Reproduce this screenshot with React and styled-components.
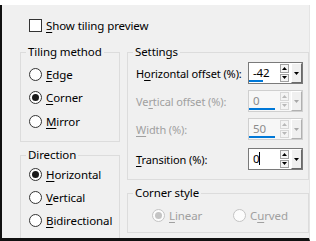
import React from 'react'
import styled, { createGlobalStyle } from 'styled-components'

const GlobalStyle = createGlobalStyle`
  html, body {
    margin: 0;
    padding: 0;
    background: #ffffff;
  }
  body {
    font-family: "Noto Sans", "Liberation Sans", sans-serif;
    font-size: 11px;
    letter-spacing: -0.1px;
    color: #000;
  }
`

const Page = styled.div`
  width: 316px;
  height: 241px;
  padding: 5px 6px 0 0;
  box-sizing: border-box;
  background: #fff;
`

const Panel = styled.div`
  height: 236px;
  box-sizing: border-box;
  background: #f0f0f0;
  border-left: 2px solid #111;
  border-bottom: 3px solid #111;
  border-right: 1px solid #e4e4e4;
  padding: 14px 0 0 18px;
  overflow: hidden;
`

const CheckRow = styled.label`
  display: flex;
  align-items: center;
  gap: 4px;
  margin-left: 9px;
  height: 13px;
  white-space: nowrap;
  font-size: 11.5px;
`

const Box = styled.span`
  width: 13px;
  height: 13px;
  box-sizing: border-box;
  border: 1px solid #333;
  background: #fff;
`

const Columns = styled.div`
  display: grid;
  grid-template-columns: 100px 182px;
  column-gap: 7px;
  margin-top: 12px;
`

const Column = styled.div`
  display: flex;
  flex-direction: column;
  gap: ${p => p.$gap}px;
`

const Group = styled.fieldset`
  margin: 0;
  padding: 0 0 0 8px;
  border: 1px solid #dcdcdc;
  min-width: 0;
  height: ${p => p.$h}px;
  box-sizing: border-box;
  display: flex;
  flex-direction: column;
`

const Legend = styled.legend`
  padding: 0 2px;
  margin-left: -3px;
  line-height: 16px;
  font-size: 11.5px;
  color: #000;
`

const RadioList = styled.div`
  display: flex;
  flex-direction: ${p => p.$row ? 'row' : 'column'};
  gap: ${p => p.$gap}px;
  margin-top: ${p => p.$top}px;
  padding-left: ${p => p.$left || 0}px;
`

const RadioItem = styled.label`
  display: flex;
  align-items: center;
  gap: 4px;
  height: 16px;
  white-space: nowrap;
  font-size: 11.5px;
  color: ${p => p.$disabled ? '#a0a0a0' : '#000'};
  width: ${p => p.$w ? p.$w + 'px' : 'auto'};
`

const Dot = styled.span`
  width: 13px;
  height: 13px;
  box-sizing: border-box;
  border-radius: 50%;
  border: 1px solid ${p => p.$disabled ? '#c4c4c4' : '#333'};
  background: ${p => p.$disabled ? '#fcfcfc' : '#fff'};
  display: flex;
  align-items: center;
  justify-content: center;
  flex-shrink: 0;

  &::after {
    content: '';
    display: ${p => p.$on ? 'block' : 'none'};
    width: 7px;
    height: 7px;
    border-radius: 50%;
    background: ${p => p.$disabled ? '#c4c4c4' : '#1a1a1a'};
  }
`

const U = styled.span`
  text-decoration: underline;
  text-underline-offset: 2px;
`

const Rows = styled.div`
  display: flex;
  flex-direction: column;
  margin-top: 1px;
`

const Row = styled.div`
  display: flex;
  align-items: center;
  justify-content: space-between;
  height: 22px;
  margin-top: ${p => p.$mt}px;
  padding-right: 5px;
  white-space: nowrap;
  color: ${p => p.$disabled ? '#a0a0a0' : '#000'};
`

const Spin = styled.div`
  width: 55px;
  height: 22px;
  box-sizing: border-box;
  border: 1px solid ${p => p.$disabled ? '#cfcfcf' : '#7a7a7a'};
  background: ${p => p.$disabled ? '#f7f7f7' : '#fff'};
  display: flex;
  align-items: stretch;
  flex-shrink: 0;
`

const Field = styled.div`
  position: relative;
  flex: 1;
  padding: 2px 0 0 4px;
  line-height: 16px;
  font-size: 11.5px;
  color: ${p => p.$disabled ? '#8c8c8c' : '#000'};
`

const Bar = styled.div`
  position: absolute;
  left: 0;
  bottom: 1px;
  height: 2px;
  background: #0078d7;
`

const Caret = styled.span`
  display: inline-block;
  width: 1px;
  height: 13px;
  background: #000;
  vertical-align: -2px;
`

const Arrows = styled.div`
  width: 9px;
  margin: 1px 2px 1px 0;
  display: flex;
  flex-direction: column;
  gap: 1px;
`

const ArrowBtn = styled.div`
  flex: 1;
  box-sizing: border-box;
  border: 1px solid ${p => p.$disabled ? '#d8d8d8' : '#a0a0a0'};
  background: #f4f4f4;
  display: flex;
  align-items: center;
  justify-content: center;
`

const Drop = styled.div`
  width: 11px;
  box-sizing: border-box;
  border-left: 1px solid #fff;
  border-top: 1px solid #fff;
  border-right: 1px solid ${p => p.$disabled ? '#b0b0b0' : '#6a6a6a'};
  border-bottom: 1px solid ${p => p.$disabled ? '#b0b0b0' : '#6a6a6a'};
  background: #f0f0f0;
  display: flex;
  align-items: center;
  justify-content: center;
`

const Tri = ({ up, color }) => (
  <svg width="5" height="3" viewBox="0 0 5 3">
    <path d={up ? 'M0 3 L2.5 0 L5 3 Z' : 'M0 0 L5 0 L2.5 3 Z'} fill={color} />
  </svg>
)

const SpinBox = ({ value, bar, disabled, caret }) => {
  const c = disabled ? '#b8b8b8' : '#000'
  return (
    <Spin $disabled={disabled}>
      <Field $disabled={disabled}>
        {value}{caret && <Caret />}
        {bar > 0 && <Bar style={{ width: bar }} />}
      </Field>
      <Arrows>
        <ArrowBtn $disabled={disabled}><Tri up color={c} /></ArrowBtn>
        <ArrowBtn $disabled={disabled}><Tri color={c} /></ArrowBtn>
      </Arrows>
      <Drop $disabled={disabled}><Tri color={disabled ? '#a8a8a8' : '#000'} /></Drop>
    </Spin>
  )
}

const Radio = ({ on, disabled, w, children }) => (
  <RadioItem $disabled={disabled} $w={w}>
    <Dot $on={on} $disabled={disabled} />
    <span>{children}</span>
  </RadioItem>
)

export default function App() {
  return (
    <Page>
      <GlobalStyle />
      <Panel>
        <CheckRow>
          <Box />
          <span><U>S</U>how tiling preview</span>
        </CheckRow>
        <Columns>
          <Column $gap={5}>
            <Group $h={98}>
              <Legend>Tiling method</Legend>
              <RadioList $gap={7.5} $top={6}>
                <Radio><U>E</U>dge</Radio>
                <Radio on><U>C</U>orner</Radio>
                <Radio><U>M</U>irror</Radio>
              </RadioList>
            </Group>
            <Group $h={110}>
              <Legend>Direction</Legend>
              <RadioList $gap={7} $top={3}>
                <Radio on><U>H</U>orizontal</Radio>
                <Radio><U>V</U>ertical</Radio>
                <Radio><U>B</U>idirectional</Radio>
              </RadioList>
            </Group>
          </Column>
          <Column $gap={5}>
            <Group $h={136}>
              <Legend>Settings</Legend>
              <Rows>
                <Row $mt={1}>
                  <span>H<U>o</U>rizontal offset (%):</span>
                  <SpinBox value="-42" bar={14} />
                </Row>
                <Row $mt={6} $disabled>
                  <span>Ve<U>r</U>tical offset (%):</span>
                  <SpinBox value="0" bar={26} disabled />
                </Row>
                <Row $mt={6} $disabled>
                  <span><U>W</U>idth (%):</span>
                  <SpinBox value="50" bar={26} disabled />
                </Row>
                <Row $mt={8}>
                  <span><U>T</U>ransition (%):</span>
                  <SpinBox value="0" caret />
                </Row>
              </Rows>
            </Group>
            <Group $h={48}>
              <Legend>Corner style</Legend>
              <RadioList $row $gap={0} $top={6} $left={16}>
                <Radio on disabled w={81}><U>L</U>inear</Radio>
                <Radio disabled>C<U>u</U>rved</Radio>
              </RadioList>
            </Group>
          </Column>
        </Columns>
      </Panel>
    </Page>
  )
}
